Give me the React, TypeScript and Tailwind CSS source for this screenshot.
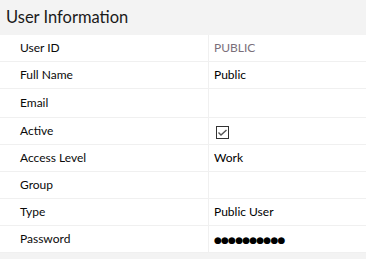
const rows: { label: string; value?: string; kind?: 'muted' | 'check' | 'password'; h: string }[] = [
  { label: 'User ID', value: 'PUBLIC', kind: 'muted', h: 'h-[27px]' },
  { label: 'Full Name', value: 'Public', h: 'h-[27px]' },
  { label: 'Email', h: 'h-[29px]' },
  { label: 'Active', kind: 'check', h: 'h-[27px]' },
  { label: 'Access Level', value: 'Work', h: 'h-[27px]' },
  { label: 'Group', h: 'h-[27px]' },
  { label: 'Type', value: 'Public User', h: 'h-[27px]' },
  { label: 'Password', kind: 'password', h: 'h-[27px]' },
]

function Checkbox() {
  return (
    <span className="flex h-[13px] w-[13px] items-center justify-center border-[1.5px] border-[#333]">
      <svg width="11" height="11" viewBox="0 0 11 11" fill="none" stroke="#555" strokeWidth="1.4">
        <polyline points="1.5,5.5 4,8 9.5,3" />
      </svg>
    </span>
  )
}

export default function App() {
  return (
    <div className="h-[259px] w-[366px] bg-[#f3f3f3] font-['Lato',sans-serif] text-[#111]">
      <div className="flex h-[35px] items-center px-[6px] pb-[1px] text-[16.5px] text-[#1a1a1a]">User Information</div>
      <div className="bg-white">
        {rows.map((row) => (
          <div key={row.label} className={`flex ${row.h} border-b border-[#f0f0f0] text-[12px]`}>
            <div className="flex w-[209px] items-center border-r border-[#f0f0f0] pl-[20px] text-[#0a0a0a]">{row.label}</div>
            <div className="flex flex-1 items-center pl-[5px]">
              {row.kind === 'check' ? (
                <span className="pl-[2px] pt-[3px]">
                  <Checkbox />
                </span>
              ) : row.kind === 'password' ? (
                <span className="pt-[2px] font-['DejaVu_Sans',sans-serif] text-[9px] leading-none tracking-[-0.8px] text-black">●●●●●●●●●●</span>
              ) : (
                <span className={row.kind === 'muted' ? 'text-[#7a6f7a]' : 'text-black'}>{row.value}</span>
              )}
            </div>
          </div>
        ))}
      </div>
    </div>
  )
}
